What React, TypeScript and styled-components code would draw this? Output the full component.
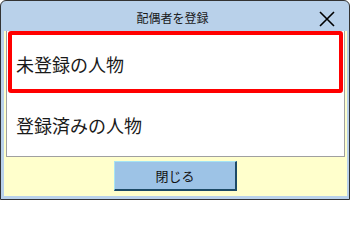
import React from "react";
import styled, { createGlobalStyle } from "styled-components";

const Global = createGlobalStyle`
  html, body { margin: 0; padding: 0; background: #ffffff; }
  body { font-family: "Noto Sans CJK JP", "Noto Sans", sans-serif; }
  * { box-sizing: border-box; }
`;

const Window = styled.div`
  width: 350px;
  height: 200px;
  border: 1px solid #333333;
  border-radius: 6px 6px 0 0;
  background: #b9d1ea;
  display: flex;
  flex-direction: column;
  overflow: hidden;
`;

const TitleBar = styled.div`
  height: 30px;
  padding-top: 4px;
  display: flex;
  align-items: center;
  flex-shrink: 0;
`;

const Title = styled.div`
  flex: 1;
  text-align: center;
  padding-left: 32px;
  font-size: 12px;
  line-height: 16px;
  color: #1a1a1a;
`;

const CloseButton = styled.button`
  width: 30px;
  height: 22px;
  margin-right: 7px;
  padding: 2px 0 0 0;
  border: none;
  background: transparent;
  display: flex;
  align-items: center;
  justify-content: center;
  cursor: pointer;
`;

const Body = styled.div`
  flex: 1;
  margin: 0 2px 3px 3px;
  padding: 0 2px;
  background: #ffffcc;
  display: flex;
  flex-direction: column;
  align-items: stretch;
`;

const ListBox = styled.div`
  height: 126px;
  background: #ffffff;
  border: 1px solid #a0a0a0;
  border-top: none;
  display: flex;
  flex-direction: column;
`;

const Item = styled.div<{ $selected?: boolean }>`
  height: ${(p) => (p.$selected ? "62px" : "63px")};
  margin: 0 ${(p) => (p.$selected ? "1px" : "0")};
  border: ${(p) => (p.$selected ? "4px solid #ff0000" : "none")};
  border-radius: ${(p) => (p.$selected ? "3px" : "0")};
  padding-left: ${(p) => (p.$selected ? "4px" : "9px")};
  padding-top: ${(p) => (p.$selected ? "4px" : "0")};
  display: flex;
  align-items: center;
  font-size: 18px;
  color: #1a1a1a;
  white-space: nowrap;
`;

const Footer = styled.div`
  flex: 1;
  display: flex;
  justify-content: center;
  padding-top: 4px;
`;

const Button = styled.button`
  width: 123px;
  height: 30px;
  padding: 0;
  background: #9dc3e6;
  border-style: solid;
  border-width: 1px 2px 2px 1px;
  border-color: #a6e4f4 #1d4a66 #1d4a66 #a6e4f4;
  font-family: "Noto Sans CJK JP", "Noto Sans", sans-serif;
  font-size: 13px;
  color: #111111;
  display: flex;
  align-items: center;
  justify-content: center;
  cursor: pointer;
`;

export default function App() {
  return (
    <>
      <Global />
      <Window>
        <TitleBar>
          <Title>配偶者を登録</Title>
          <CloseButton aria-label="close">
            <svg width="16" height="16" viewBox="0 0 16 16">
              <path d="M1 1 L15 15 M15 1 L1 15" stroke="#000" strokeWidth="1.6" fill="none" />
            </svg>
          </CloseButton>
        </TitleBar>
        <Body>
          <ListBox>
            <Item $selected>未登録の人物</Item>
            <Item>登録済みの人物</Item>
          </ListBox>
          <Footer>
            <Button>閉じる</Button>
          </Footer>
        </Body>
      </Window>
    </>
  );
}
